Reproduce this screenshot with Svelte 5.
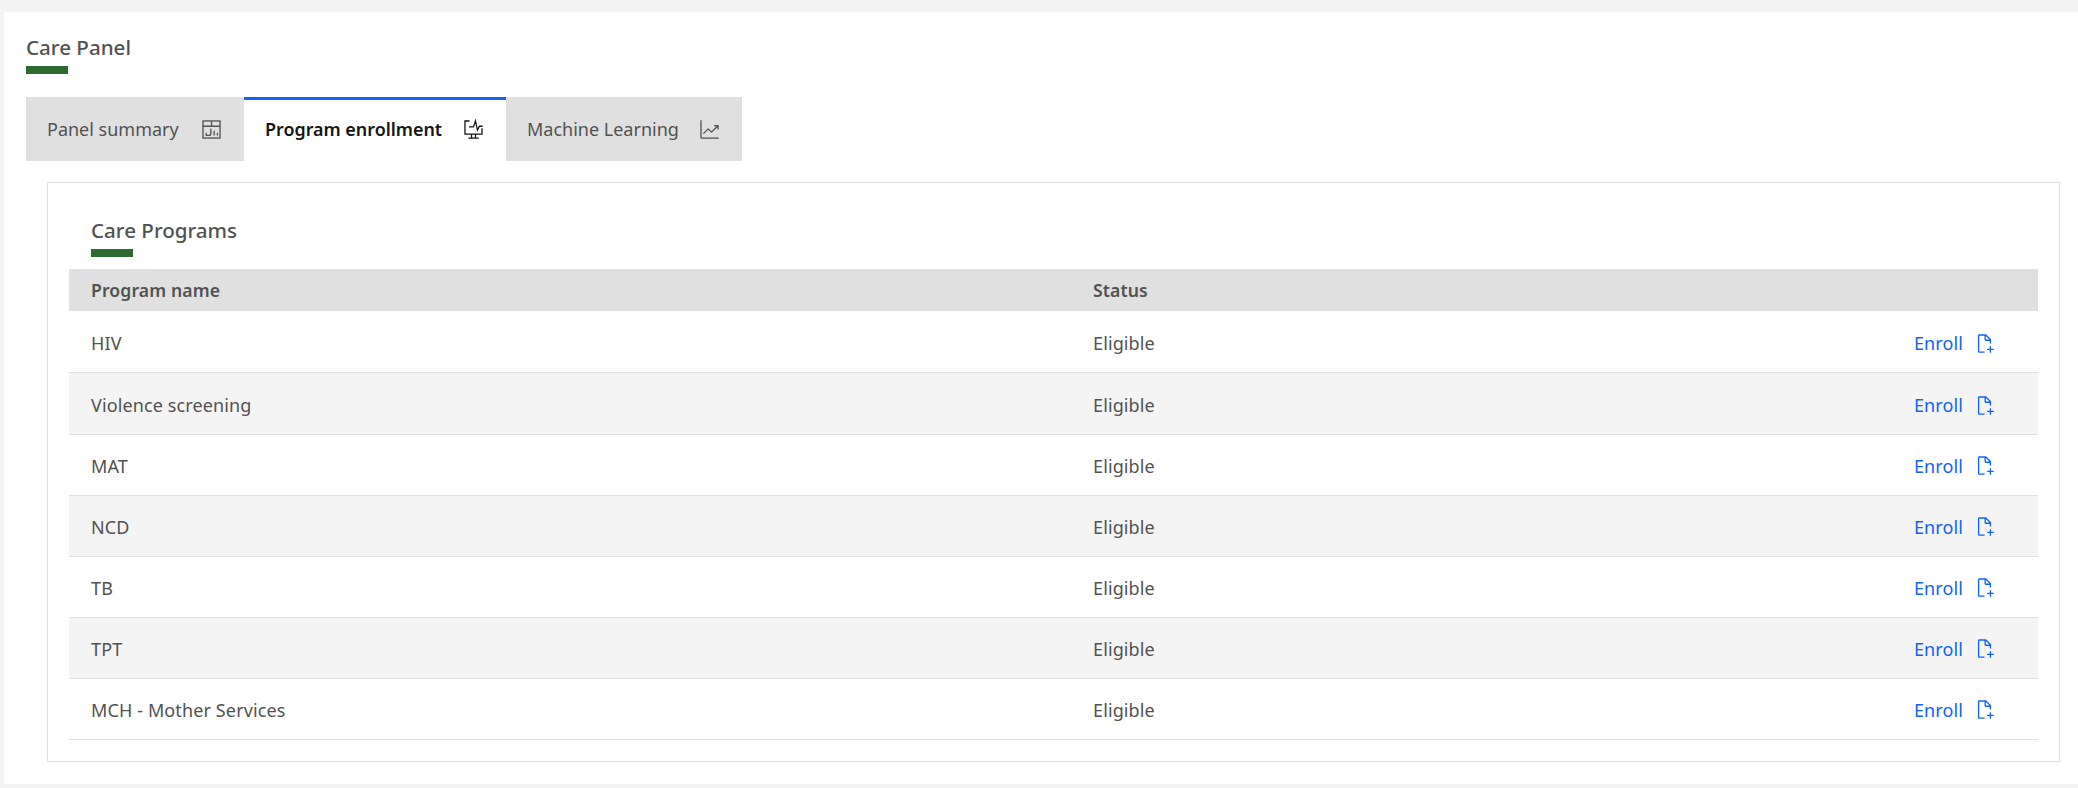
<script>
  const tabs = [
    { label: "Panel summary", icon: "report" },
    { label: "Program enrollment", icon: "monitor", active: true },
    { label: "Machine Learning", icon: "growth" },
  ];
  const programs = ["HIV", "Violence screening", "MAT", "NCD", "TB", "TPT", "MCH - Mother Services"];
</script>

<main class="page">
  <h2 class="title">Care Panel</h2>
  <div class="tabs">
    {#each tabs as tab}
      <div class="tab" class:active={tab.active}>
        <span>{tab.label}</span>
        {#if tab.icon === "report"}
          <svg viewBox="0 0 32 32" fill="none" stroke="currentColor" stroke-width="2">
            <rect x="3" y="3" width="26" height="26" />
            <path d="M3 11h26M16 3v8M15 15v7q0 3-3 3H8v-4M20 18v7M25 21v4" />
          </svg>
        {:else if tab.icon === "monitor"}
          <svg viewBox="0 0 32 32" fill="none" stroke="currentColor" stroke-width="2">
            <path d="M10 3H3v20h26v-9M13 23v6M19 23v6M8 29h16M9 12h7l3-9 3 14 3-6h5" />
          </svg>
        {:else}
          <svg viewBox="0 0 32 32" fill="currentColor">
            <path d="M4 2H2v26a2 2 0 0 0 2 2h26v-2H4Z" />
            <path d="M30 9h-7v2h3.59L19 18.59l-4.29-4.3a1 1 0 0 0-1.42 0L6 21.59 7.41 23 14 16.41l4.29 4.3a1 1 0 0 0 1.42 0L28 12.41V16h2Z" />
          </svg>
        {/if}
      </div>
    {/each}
  </div>

  <section class="panel">
    <h3 class="title sub">Care Programs</h3>
    <table>
      <thead>
        <tr>
          <th class="name">Program name</th>
          <th>Status</th>
          <th class="action"></th>
        </tr>
      </thead>
      <tbody>
        {#each programs as program}
          <tr>
            <td class="name">{program}</td>
            <td>Eligible</td>
            <td class="action">
              <a href="#enroll">
                Enroll
                <svg viewBox="0 0 32 32" fill="currentColor">
                  <path d="M30 24h-4v-4h-2v4h-4v2h4v4h2v-4h4z" />
                  <path d="M16 28H8V4h8v6a2.006 2.006 0 0 0 2 2h6v4h2v-6a.91.91 0 0 0-.3-.7l-7-7A.909.909 0 0 0 18 2H8a2.006 2.006 0 0 0-2 2v24a2.006 2.006 0 0 0 2 2h8zm2-23.6 5.6 5.6H18z" />
                </svg>
              </a>
            </td>
          </tr>
        {/each}
      </tbody>
    </table>
  </section>
</main>

<style>
  :global(body) {
    background: #f4f4f4;
    font-family: "Noto Sans", "Liberation Sans", sans-serif;
  }

  .page {
    margin: 12px 0 0 4px;
    height: 772px;
    box-sizing: border-box;
    padding: 21px 18px 0 22px;
    background: #fff;
  }

  .title {
    margin: 0;
    height: 41px;
    position: relative;
    font-size: 20.6px;
    line-height: 29px;
    font-weight: 500;
    color: #525252;
  }

  .title::after {
    content: "";
    position: absolute;
    left: 0;
    bottom: 0;
    width: 42px;
    height: 8px;
    background: #2e6b2e;
  }

  .tabs {
    display: flex;
    margin-top: 23px;
  }

  .tab {
    display: flex;
    align-items: center;
    justify-content: space-between;
    width: 218px;
    height: 64px;
    box-sizing: border-box;
    padding: 0 22px 0 21px;
    background: #e0e0e0;
    color: #525252;
    font-size: 18px;
  }

  .tab:nth-child(2) {
    width: 262px;
  }

  .tab:nth-child(3) {
    width: 236px;
  }

  .tab.active {
    background: #fff;
    color: #161616;
    font-weight: 600;
    font-size: 17.9px;
    border-top: 3px solid #0f62fe;
    padding-bottom: 3px;
  }

  .tab svg {
    width: 21px;
    height: 21px;
    flex: none;
  }

  .panel {
    margin: 21px 0 0 21px;
    height: 580px;
    box-sizing: border-box;
    border: 1px solid #e0e0e0;
    padding: 33px 21px 0;
  }

  .sub {
    margin-left: 22px;
    margin-bottom: 12px;
  }

  table {
    width: 100%;
    border-collapse: separate;
    border-spacing: 0;
    table-layout: fixed;
    font-size: 18px;
    letter-spacing: 0.12px;
    color: #525252;
  }

  th {
    height: 42px;
    padding: 0;
    background: #e0e0e0;
    text-align: left;
    font-weight: 600;
    font-size: 17.6px;
  }

  td {
    height: 59px;
    padding: 1px 0 0;
    border-bottom: 1px solid #e0e0e0;
  }

  tbody tr:nth-child(-n + 2) td {
    height: 58px;
    padding-top: 3px;
  }

  tbody tr:nth-child(even) td {
    background: #f4f4f4;
  }

  th.name,
  td.name {
    width: 1002px;
    padding-left: 22px;
  }

  th.action,
  td.action {
    width: 600px;
    text-align: right;
    padding-right: 43px;
  }

  a {
    display: inline-flex;
    align-items: center;
    gap: 11px;
    color: #0f62fe;
    text-decoration: none;
  }

  a svg {
    width: 21px;
    height: 21px;
  }
</style>
